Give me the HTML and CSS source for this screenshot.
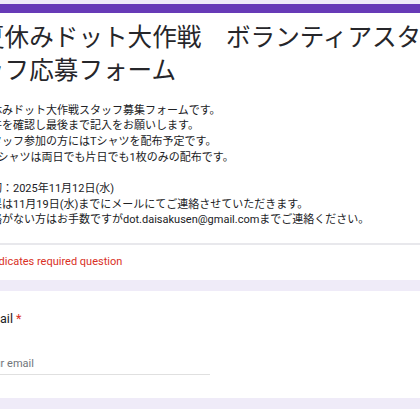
FILE: index.html
```html
<!DOCTYPE html>
<html lang="ja">
<head>
<meta charset="utf-8">
<title>夏休みドット大作戦　ボランティアスタッフ応募フォーム</title>
<link rel="stylesheet" href="styles.css">
</head>
<body>
<div class="viewport">
  <main class="form">
    <section class="card header-card">
      <div class="accent"></div>
      <div class="header-body">
        <h1 class="title">夏休みドット大作戦　ボランティアスタ<br>ッフ応募フォーム</h1>
        <div class="desc">夏休みドット大作戦スタッフ募集フォームです。
条件を確認し最後まで記入をお願いします。
スタッフ参加の方にはTシャツを配布予定です。
※Tシャツは両日でも片日でも1枚のみの配布です。

締切：2025年11月12日(水)
結果は11月19日(水)までにメールにてご連絡させていただきます。
連絡がない方はお手数ですがdot.daisakusen@gmail.comまでご連絡ください。</div>
      </div>
      <div class="required-note">* Indicates required question</div>
    </section>
    <section class="card question">
      <div class="q-title">Email <span class="req">*</span></div>
      <div class="input">Your email</div>
    </section>
    <section class="card next"></section>
  </main>
</div>
</body>
</html>
```
FILE: styles.css
```css
html, body {
  margin: 0;
  padding: 0;
  background: #efebf8;
  overflow: hidden;
}

.viewport {
  width: 420px;
  height: 420px;
  overflow: hidden;
}

.form {
  width: 520px;
  margin-left: -42px;
  padding-top: 4px;
  display: flex;
  flex-direction: column;
  gap: 11px;
  font-family: Roboto, "Noto Sans CJK JP", sans-serif;
  color: #202124;
}

.card {
  background: #fff;
}

.accent {
  height: 9px;
  background: #673ab7;
}

.header-body {
  padding: 6px 24px 15px;
}

.title {
  margin: 0 0 0 -2px;
  font-family: "Noto Sans CJK JP", sans-serif;
  font-size: 24.6px;
  line-height: 33px;
  font-weight: 400;
  color: #26262a;
}

.desc {
  margin: 17.5px 0 0 -2px;
  font-size: 11px;
  line-height: 15.7px;
  white-space: pre-line;
}

.required-note {
  border-top: 2px solid #e8e8ec;
  padding: 9px 24px 11px;
  font-size: 11px;
  line-height: 15px;
  color: #d93025;
}

.question {
  padding: 19px 24px 23px;
}

.q-title {
  font-size: 12.5px;
  line-height: 18px;
  color: #202124;
}

.req {
  color: #d93025;
}

.input {
  margin-top: 28px;
  width: 228px;
  padding-bottom: 3px;
  border-bottom: 1px solid #e0e0e0;
  font-size: 11px;
  line-height: 15px;
  color: #70757a;
}

.next {
  height: 40px;
}
```
